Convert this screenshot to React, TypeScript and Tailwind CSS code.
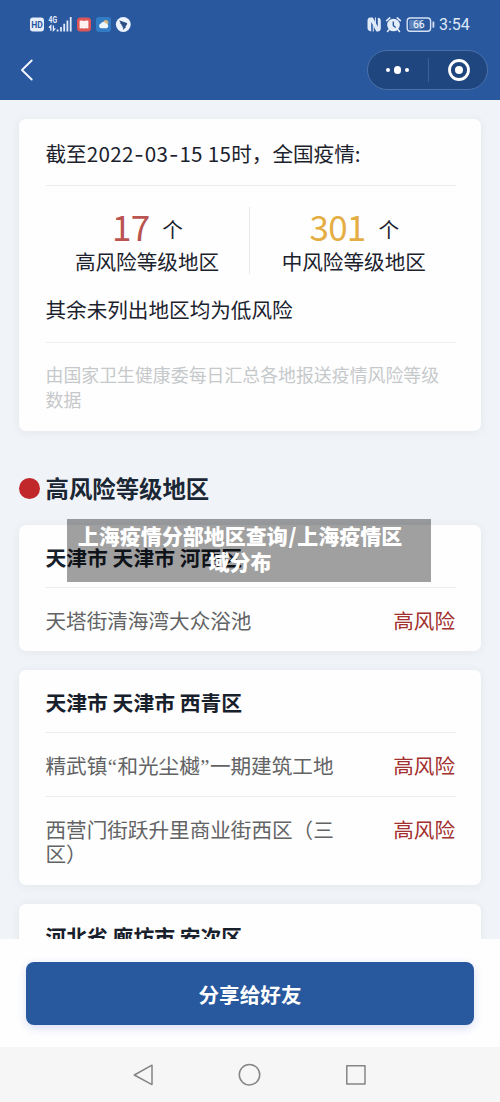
import type { ReactNode } from 'react';

interface Area {
  lines: string[];
  level: string;
}

interface District {
  name: string;
  areas: Area[];
}

const districts: District[] = [
  {
    name: '天津市 天津市 河西区',
    areas: [{ lines: ['天塔街清海湾大众浴池'], level: '高风险' }],
  },
  {
    name: '天津市 天津市 西青区',
    areas: [
      { lines: ['精武镇“和光尘樾”一期建筑工地'], level: '高风险' },
      { lines: ['西营门街跃升里商业街西区（三', '区）'], level: '高风险' },
    ],
  },
  { name: '河北省 廊坊市 安次区', areas: [] },
];

function StatusIconsLeft() {
  return (
    <svg width="104" height="20" viewBox="0 0 104 20" fill="none">
      {/* HD */}
      <rect x="0" y="3.5" width="14" height="14" rx="3" fill="#e6eefb" />
      <text x="7" y="14" fontSize="9.5" fontWeight="700" textAnchor="middle" textLength="11.5" lengthAdjust="spacingAndGlyphs" fill="#2a589f" fontFamily="Roboto, sans-serif">HD</text>
      {/* signal */}
      <text x="18.5" y="9.3" fontSize="8.5" fontWeight="700" textLength="8.5" lengthAdjust="spacingAndGlyphs" fill="#e6eefb" fontFamily="Roboto, sans-serif">4G</text>
      <path d="M20.8 16.8v-5l-1.8 2M23.4 11.4v5l1.9-2" stroke="#e6eefb" strokeWidth="1.3" />
      <path d="M27.6 15.4v2.1M31 13v4.5M34.2 9.8v7.7M37.4 6.4v11.1M40.7 3v14.5" stroke="#dfe9f8" strokeWidth="1.8" />
      {/* reader */}
      <rect x="47" y="3.5" width="14" height="14" rx="3.5" fill="#dc5658" />
      <path d="M49.6 6.8q2.4-.8 4.4.1 2-.9 4.4-.1v7.6q-2.4-.6-4.4.2-2-.8-4.4-.2z" fill="#fff1ef" />
      {/* weather */}
      <rect x="66" y="3" width="15" height="15" rx="3" fill="#327cc6" />
      <circle cx="75.8" cy="8.4" r="2.5" fill="#d5b782" />
      <path d="M70.8 14.2a2.3 2.3 0 0 1-.2-4.4 3.1 3.1 0 0 1 5.6-.2 2.4 2.4 0 0 1 .6 4.6z" fill="#edf5ff" />
      {/* messenger */}
      <circle cx="93.3" cy="10.5" r="7.4" fill="#eef4fd" />
      <path d="M89 6.3l7.2 2.4c1.1.4 1.2 1 .7 1.8l-1.6 2.3.9.2-3.4 3 .5-2.6-1.3-.3.7-1-2-1.3 1.2-.1-2.4-2 1.2.1z" fill="#2a4f83" />
    </svg>
  );
}

function StatusIconsRight() {
  return (
    <svg width="68" height="20" viewBox="0 0 68 20" fill="none">
      {/* NFC */}
      <path d="M3.2 3.5h2.6l5 9.3V3.8q3 .2 3 3v7.4q0 3-3 3.3H9.3l-5.1-9.4v9.3Q.5 17 .5 14V6.8q0-3 2.7-3.3z" fill="#dfe9f8" />
      <path d="M6.3 17.5V11M8.4 3.5v6.4" stroke="#dfe9f8" strokeWidth="1" />
      {/* alarm */}
      <circle cx="26.5" cy="11" r="6.3" fill="#e3ecf9" />
      <path d="M19.6 6.6l3.2-2.7M33.4 6.6l-3.2-2.7M22.2 15.5l-1.7 2M30.8 15.5l1.7 2" stroke="#e3ecf9" strokeWidth="1.6" strokeLinecap="round" />
      <path d="M26.3 7.4v4l2.3 2.2" stroke="#2a589f" strokeWidth="1.4" />
      {/* battery */}
      <rect x="40.2" y="4" width="23.4" height="13.2" rx="3" stroke="#d5e1f3" strokeWidth="1.4" />
      <rect x="42.2" y="6" width="13" height="9.2" rx="1" fill="#5d82bb" />
      <path d="M66.4 7.6v6" stroke="#d5e1f3" strokeWidth="1.8" />
      <text x="51.8" y="14.4" fontSize="10.5" textAnchor="middle" fill="#f4f8ff" fontFamily="Roboto, sans-serif">66</text>
    </svg>
  );
}

function Header() {
  return (
    <header className="h-[100px] bg-[#2a589f]">
      <div className="flex h-12 items-center justify-between pl-[30px] pr-[31px]">
        <StatusIconsLeft />
        <div className="flex items-center gap-1">
          <StatusIconsRight />
          <span className="w-[30px] whitespace-nowrap pt-px font-[Roboto,sans-serif] text-[16px] leading-5 text-[#dfe9f8]">3:54</span>
        </div>
      </div>
      <div className="flex h-11 items-center justify-between pl-5 pr-3">
        <svg width="14" height="22" viewBox="0 0 14 22" fill="none" stroke="#f3f7fd" strokeWidth="1.9" strokeLinecap="round" strokeLinejoin="round">
          <path d="M11.7 1.5L2 11l9.7 9.5" />
        </svg>
        <div className="flex h-10 w-[121px] items-center rounded-full border border-[#4a70a9] bg-[#20467f]">
          <div className="flex w-[60px] items-center justify-center gap-1 pr-px">
            <span className="size-1 rounded-full bg-white" />
            <span className="size-[7.5px] rounded-full bg-white" />
            <span className="size-1 rounded-full bg-white" />
          </div>
          <div className="h-6 w-px bg-[#3d609a]" />
          <div className="flex flex-1 items-center justify-center pl-px">
            <svg width="23" height="22" viewBox="0 0 23 22">
              <circle cx="12" cy="11" r="9.5" fill="none" stroke="#fff" strokeWidth="2.8" />
              <circle cx="12" cy="11" r="4" fill="#fff" />
            </svg>
          </div>
        </div>
      </div>
    </header>
  );
}

function Card({ className = '', children }: { className?: string; children: ReactNode }) {
  return (
    <section className={`rounded-[7px] bg-[#fefefe] pl-[26.5px] pr-[25px] shadow-[0_1px_8px_rgba(60,80,110,0.07)] ${className}`}>
      {children}
    </section>
  );
}

function Stat({ value, label, color, className }: { value: string; label: string; color: string; className: string }) {
  return (
    <div className={`flex flex-col items-center ${className}`}>
      <div className="flex h-[42px] items-start gap-[13px] pl-px">
        <span className={`text-[35px] leading-10 tracking-[-0.8px] ${color}`}>{value}</span>
        <span className="pt-2 leading-[30px]">个</span>
      </div>
      <div className="leading-[26px]">{label}</div>
    </div>
  );
}

function Dash() {
  return <span className="mx-[0.7px] font-[Inter,sans-serif]">-</span>;
}

function Summary() {
  return (
    <Card className="h-[312px] pt-[19px]">
      <h1 className="h-[30px] whitespace-nowrap leading-[30px]">
        截至
        <span className="tracking-[0.3px]">
          2022<Dash />03<Dash />15 15
        </span>
        时，全国疫情:
      </h1>
      <div className="mt-[17px] h-px bg-[#ebebed]" />
      <div className="flex pt-5">
        <Stat value="17" label="高风险等级地区" color="text-[#b95450]" className="w-[203px]" />
        <div className="mt-px h-[67px] w-px bg-[#e9e9ec]" />
        <Stat value="301" label="中风险等级地区" color="text-[#e5ae45]" className="flex-1 pl-0.5" />
      </div>
      <p className="mt-5 leading-[30px]">其余未列出地区均为低风险</p>
      <div className="mt-[18px] h-px bg-[#eeeef0]" />
      <p className="mt-[19px] whitespace-nowrap text-[17.9px] leading-[24.5px] text-[#c6c9cb]">
        由国家卫生健康委每日汇总各地报送疫情风险等级
        <br />
        数据
      </p>
    </Card>
  );
}

// curly quotes are full width in the CJK face, so they get a narrow one
function AreaLine({ text }: { text: string }) {
  return (
    <div className="h-[24.5px]">
      {text.split(/([“”])/).map((part, idx) =>
        part === '“' || part === '”' ? (
          <span key={idx} className="px-[0.5px] font-['Liberation_Serif',serif]">{part}</span>
        ) : (
          part
        )
      )}
    </div>
  );
}

function DistrictCard({ district }: { district: District }) {
  return (
    <Card className="pt-[17px]">
      <h3 className="whitespace-nowrap pb-[15px] text-[20.8px] font-bold leading-[30px] text-[#18202b]">{district.name}</h3>
      {district.areas.map((area) => (
        <div
          key={area.lines[0]}
          className="flex items-start justify-between border-t border-[#ebebed] pb-[19px] pt-[19.5px] leading-[24.5px]"
        >
          <div className="whitespace-nowrap text-[#626365]">
            {area.lines.map((line) => (
              <AreaLine key={line} text={line} />
            ))}
          </div>
          <span className="pr-px text-[#a2302f]">{area.level}</span>
        </div>
      ))}
    </Card>
  );
}

export default function App() {
  return (
    <div className="relative flex h-[1102px] w-[500px] flex-col overflow-hidden bg-[#f0f3f7] font-['Noto_Sans_CJK_SC',sans-serif] text-[20.6px] text-[#1b222d]">
      <Header />

      <main className="h-[839px] overflow-hidden px-[19px] pt-[19px]">
        <Summary />
        <div className="mt-[42px] flex items-center gap-[5.5px] leading-[30px]">
          <span className="size-[21px] rounded-full bg-[#c0282b]" />
          <h2 className="text-[23.4px] font-bold text-[#1b2735]">高风险等级地区</h2>
        </div>
        <div className="mt-[22px] flex flex-col gap-[19px]">
          {districts.map((district) => (
            <DistrictCard key={district.name} district={district} />
          ))}
        </div>
      </main>

      <footer className="h-[108px] bg-[#fefefe] px-[26px] pt-[23px]">
        <button className="h-[63px] w-full rounded-lg bg-[#28589d] pt-px font-bold text-white shadow-[0_3px_10px_rgba(70,90,220,0.2)]">
          分享给好友
        </button>
      </footer>

      <nav className="flex h-[55px] items-center justify-center bg-[#f6f6f6]">
        <svg width="250" height="24" viewBox="0 0 250 24" fill="none" stroke="#858585" strokeWidth="1.5" strokeLinejoin="round">
          <path d="M27 2.2V21.6L9.3 12z" />
          <circle cx="124.5" cy="11.7" r="10.2" />
          <rect x="221.8" y="2.8" width="18.2" height="18.2" />
        </svg>
      </nav>

      {/* caption banner over the list */}
      <div className="absolute left-[67px] top-[519px] h-[63px] w-[364px] bg-black/37 pr-[18px] pt-[3px] text-center text-[21px] font-black leading-[26px] text-white">
        上海疫情分部地区查询<span className="px-[0.8px]">/</span>上海疫情区
        <br />
        域分布
      </div>
    </div>
  );
}
